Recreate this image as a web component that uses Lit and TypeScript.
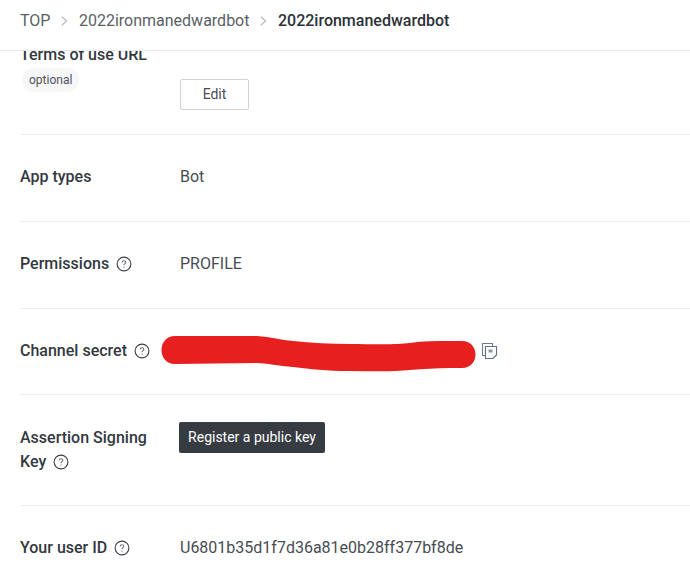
import { LitElement, html, css } from 'lit';
import { customElement } from 'lit/decorators.js';

const help = html`<svg class="help" width="16" height="16" viewBox="0 0 16 16" fill="none">
  <circle cx="8" cy="8" r="6.9" stroke="#3a4048" stroke-width="1.1"></circle>
  <path d="M6.2 6.4c0-1 .8-1.7 1.8-1.7s1.8.7 1.8 1.6c0 1.3-1.8 1.4-1.8 2.9" stroke="#6b7178" stroke-width="1.1"></path>
  <circle cx="8" cy="11.1" r=".7" fill="#6b7178"></circle>
</svg>`;

const copyIcon = html`<svg class="copy" width="17" height="18" viewBox="0 0 17 18" fill="none">
  <path d="M1.5 1.5H11.5V4.5H4.5V13.5H1.5Z" fill="#fff" stroke="#6d7a90" stroke-width="1.1"></path>
  <path d="M4.5 4.5H15.5V13L12 16.5H4.5Z" fill="#fff" stroke="#5f6f8a" stroke-width="1.1"></path>
  <rect x="7.5" y="7.5" width="4" height="3" fill="#8d949e"></rect>
</svg>`;

@customElement('app-root')
export class AppRoot extends LitElement {
  static styles = css`
    :host {
      display: block;
      width: 690px;
      height: 581px;
      overflow: hidden;
      background: #fff;
      font-family: Roboto, "Liberation Sans", sans-serif;
      color: #474c53;
      font-size: 16px;
    }
    .crumbs {
      height: 51px;
      box-sizing: border-box;
      border-bottom: 1px solid #e6e8ea;
      padding: 0 20px 9px 20px;
      display: flex;
      align-items: center;
      gap: 10px;
      font-size: 16px;
      line-height: 40px;
      color: #5a5f66;
    }
    .crumbs .current {
      color: #2c3138;
      font-weight: 500;
    }
    .sep {
      flex: none;
    }
    .scroll {
      height: 530px;
      overflow: hidden;
      padding: 0 0 0 20px;
    }
    .rows {
      margin-top: -8px;
    }
    .row {
      display: flex;
      border-bottom: 1px solid #eceef0;
      line-height: 24px;
      padding-top: 30px;
      box-sizing: border-box;
    }
    .row:last-child {
      border-bottom: none;
    }
    .row.first {
      height: 92px;
      padding-top: 0;
    }
    .r87 {
      height: 87px;
    }
    .r86 {
      height: 86px;
    }
    .r111 {
      height: 111px;
      padding-top: 31px;
    }
    .label {
      width: 140px;
      margin-right: 20px;
      flex: none;
      font-weight: 500;
      color: #33383f;
    }
    .help {
      vertical-align: -3px;
      margin-left: 3px;
    }
    .value {
      position: relative;
      flex: 1;
    }
    .tag {
      display: inline-block;
      font-size: 12px;
      font-weight: 400;
      line-height: 24px;
      padding: 0 7px;
      border-radius: 12px;
      background: #f6f7f9;
      color: #4e535a;
      margin: 1px 0 0 2px;
    }
    .edit {
      display: block;
      margin-top: 36px;
      width: 69px;
      height: 31px;
      box-sizing: border-box;
      border: 1px solid #cfd2d6;
      border-radius: 2px;
      background: #fff;
      font: 14px/1 Roboto, sans-serif;
      color: #474c53;
      padding: 0 0 2px;
    }
    .dark {
      display: block;
      margin: -4px 0 0 -1px;
      width: 146px;
      height: 31px;
      border: none;
      border-radius: 2px;
      background: #373c43;
      color: #fff;
      font: 14px/31px Roboto, sans-serif;
      padding: 0;
    }
    .scribble {
      position: absolute;
      left: -19px;
      top: -12px;
    }
    .copy {
      position: absolute;
      left: 301px;
      top: 3px;
    }
  `;

  render() {
    const sep = html`<svg class="sep" width="8.5" height="12" viewBox="0 0 9 12" fill="none">
      <path d="M2 1.5 7 6 2 10.5" stroke="#b5b8bc" stroke-width="1.2"></path>
    </svg>`;
    return html`
      <nav class="crumbs">
        <span>TOP</span>${sep}<span>2022ironmanedwardbot</span>${sep}<span class="current">2022ironmanedwardbot</span>
      </nav>
      <div class="scroll">
        <div class="rows">
          <div class="row first">
            <div class="label">Terms of use URL<br /><span class="tag">optional</span></div>
            <div class="value"><button class="edit">Edit</button></div>
          </div>
          <div class="row r87">
            <div class="label">App types</div>
            <div class="value">Bot</div>
          </div>
          <div class="row r87">
            <div class="label">Permissions ${help}</div>
            <div class="value">PROFILE</div>
          </div>
          <div class="row r86">
            <div class="label">Channel secret ${help}</div>
            <div class="value">
              <svg class="scribble" width="320" height="50" viewBox="0 0 320 50">
                <path
                  d="M14 9C40 9 70 9 96 9C110 10 120 13 132 14C150 16 170 17 189 17C210 17 235 18 249 16C262 14 275 14 289 14L301 14C319 14 319 41 301 41L289 41C275 41 262 42 249 43C230 45 210 44 189 44C165 44 150 42 132 40C118 39 105 36 96 36L14 37C-4 37 -4 9 14 9Z"
                  fill="#e81f1f"
                ></path>
              </svg>
              ${copyIcon}
            </div>
          </div>
          <div class="row r111">
            <div class="label">Assertion Signing Key ${help}</div>
            <div class="value"><button class="dark">Register a public key</button></div>
          </div>
          <div class="row r87">
            <div class="label">Your user ID ${help}</div>
            <div class="value">U6801b35d1f7d36a81e0b28ff377bf8de</div>
          </div>
        </div>
      </div>
    `;
  }
}
